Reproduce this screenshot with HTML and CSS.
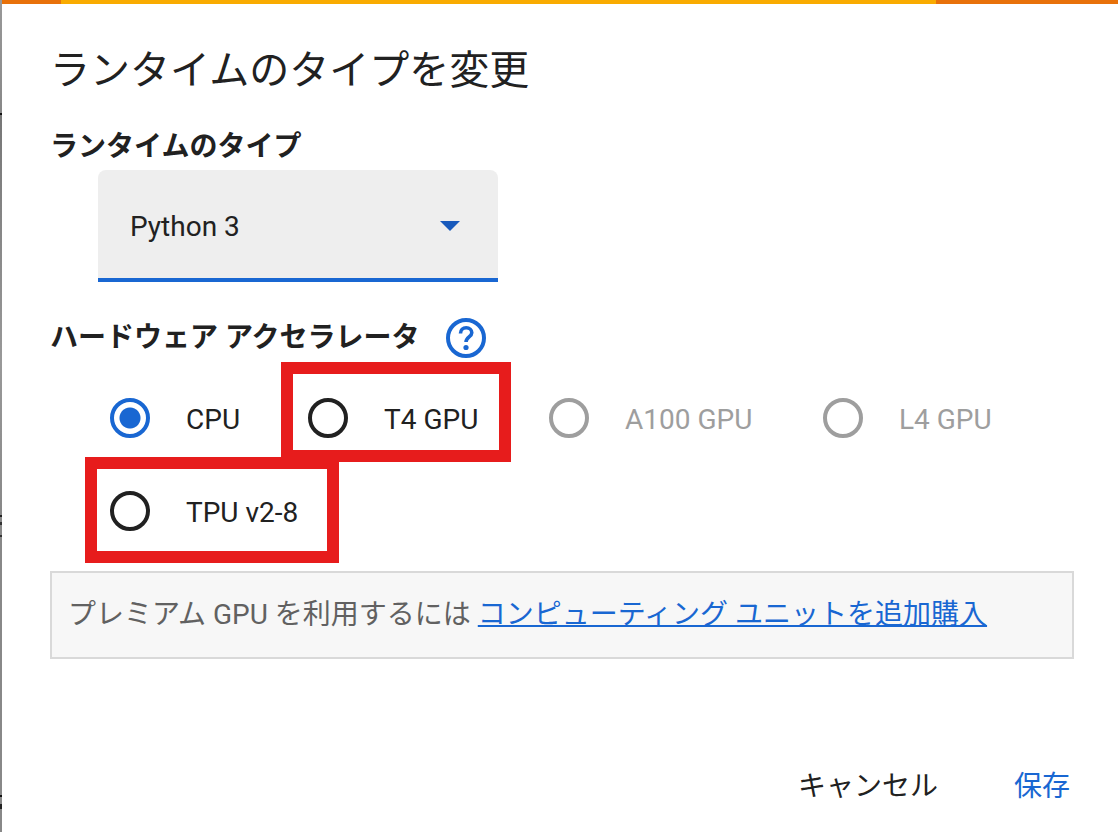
FILE: index.html
```html
<!DOCTYPE html>
<html lang="ja">
<head>
<meta charset="utf-8">
<meta name="viewport" content="width=device-width, initial-scale=1">
<title>ランタイムのタイプを変更</title>
<link rel="stylesheet" href="styles.css">
</head>
<body>
<div class="backdrop">
  <form class="dialog" role="dialog" aria-labelledby="dialog-title">
    <div class="accent"></div>
    <div class="content">
      <h1 class="title" id="dialog-title">ランタイムのタイプを変更</h1>
      <label class="heading" for="runtime">ランタイムのタイプ</label>
      <div class="select-field">
        <select class="select" id="runtime">
          <option>Python 3</option>
        </select>
        <svg class="select-arrow" viewBox="0 0 20 10" aria-hidden="true"><path d="M0 0H20L10 10Z" fill="#185abc"/></svg>
      </div>
      <div class="heading-row">
        <h2 class="heading" id="accelerator">ハードウェア アクセラレータ</h2>
        <button class="help" type="button" aria-label="ヘルプ">
          <svg class="help-icon" viewBox="0 0 40 40" aria-hidden="true">
            <circle cx="20" cy="20" r="18" fill="none" stroke="#1967d2" stroke-width="4"/>
            <path d="M14.500 15.500C14.500 12 17 9.800 20.200 9.800C23.500 9.800 25.800 12 25.800 14.800C25.800 18.800 20 19.200 20 24" fill="none" stroke="#1967d2" stroke-width="3.600"/>
            <circle cx="20" cy="29.500" r="2.600" fill="#1967d2"/>
          </svg>
        </button>
      </div>
      <div class="options" role="radiogroup" aria-labelledby="accelerator">
        <label class="option"><input class="radio" type="radio" name="accelerator" checked><span class="option-text">CPU</span></label>
        <label class="option marked"><input class="radio" type="radio" name="accelerator"><span class="option-text">T4 GPU</span></label>
        <label class="option disabled"><input class="radio" type="radio" name="accelerator" disabled><span class="option-text">A100 GPU</span></label>
        <label class="option disabled"><input class="radio" type="radio" name="accelerator" disabled><span class="option-text">L4 GPU</span></label>
        <label class="option option-wide marked marked-wide"><input class="radio" type="radio" name="accelerator"><span class="option-text">TPU v2-8</span></label>
      </div>
      <p class="notice">プレミアム GPU を利用するには <a class="link" href="#">コンピューティング ユニットを追加購入</a></p>
      <div class="actions">
        <button class="action" type="button">キャンセル</button>
        <button class="action primary" type="submit">保存</button>
      </div>
    </div>
  </form>
</div>
</body>
</html>
```

FILE: styles.css
```css
*,
*::before,
*::after {
  box-sizing: border-box;
}

body {
  margin: 0;
  font-family: Roboto, "Noto Sans CJK JP", sans-serif;
  font-size: 28px;
  line-height: 40px;
  color: #212121;
}

/* Dimmed page, visible as a thin strip beside the dialog */
.backdrop {
  min-height: 100vh;
  padding-left: 2px;
  background: linear-gradient(#999 0, #888 113px, #111 113px, #111 115px, #777 115px, #999 362px, #888 515px, #222 515px, #222 517px, #888 517px, #888 522px, #333 522px, #333 525px, #888 525px, #888 535px, #333 535px, #333 537px, #888 537px, #888 795px, #111 795px, #111 797px, #888 797px, #888 804px, #222 804px, #222 809px, #888 809px);
}

.dialog {
  display: flex;
  flex-direction: column;
  min-height: 100vh;
  background: #fff;
}

.accent {
  height: 4px;
  background: linear-gradient(90deg, #e8710a 59px, #f9ab00 59px calc(100% - 182px), #e8710a calc(100% - 182px));
}

.content {
  display: flex;
  flex: 1;
  flex-direction: column;
  padding: 37px 44px 25px 48px;
}

.title {
  margin: 0;
  font-size: 40px;
  font-weight: 400;
  line-height: 60px;
}

.heading {
  margin: 26px 0 0;
  font-size: 28px;
  font-weight: 700;
  line-height: 40px;
}

.select-field {
  display: grid;
  align-items: center;
  width: 400px;
  max-width: 100%;
  margin: 3px 0 0 48px;
}

.select {
  grid-area: 1 / 1;
  width: 100%;
  height: 112px;
  padding: 6px 64px 0 32px;
  appearance: none;
  border: 0;
  border-bottom: 4px solid #1967d2;
  border-radius: 8px 8px 0 0;
  background: #eee;
  color: inherit;
  font: inherit;
}

.select-arrow {
  grid-area: 1 / 1;
  justify-self: end;
  width: 20px;
  height: 10px;
  margin-right: 38px;
  pointer-events: none;
}

.heading-row {
  display: flex;
  align-items: center;
  gap: 26px;
  margin-top: 36px;
}

.heading-row .heading {
  margin: 0;
}

.help {
  width: 40px;
  height: 40px;
  padding: 0;
  border: 0;
  background: none;
}

.help-icon {
  display: block;
}

.options {
  display: grid;
  grid-template-columns: 130px 173px 206px auto;
  gap: 49px 68px;
  margin: 38px 0 0 60px;
}

.option {
  position: relative;
  display: flex;
  align-items: center;
  gap: 36px;
  white-space: nowrap;
}

.option-wide {
  grid-column: span 2;
}

.option-text {
  padding-top: 4px;
}

.radio {
  flex: none;
  width: 40px;
  height: 40px;
  margin: 0;
  appearance: none;
  border: 4px solid #212121;
  border-radius: 50%;
}

.radio:checked {
  border-color: #1967d2;
  background: radial-gradient(circle, #1967d2 10px, transparent 11px);
}

.disabled {
  color: #9e9e9e;
}

.disabled .radio {
  border-color: #9e9e9e;
}

/* Red callout frames drawn over the highlighted options */
.marked::after {
  content: "";
  position: absolute;
  top: -34px;
  left: -27px;
  width: 230px;
  height: 100px;
  border: 12px solid #e71c1c;
  pointer-events: none;
}

.marked-wide::after {
  top: -32px;
  left: -25px;
  width: 254px;
  height: 106px;
}

.notice {
  margin: 38px 0 0;
  padding: 22px 16px;
  border: 2px solid #d9d9d9;
  background: #f7f7f7;
  color: #616161;
}

.link {
  color: #1967d2;
  text-decoration-thickness: 2px;
}

.actions {
  display: flex;
  justify-content: flex-end;
  gap: 76px;
  margin-top: auto;
  padding-right: 4px;
}

.action {
  padding: 0;
  border: 0;
  background: none;
  color: inherit;
  font: inherit;
}

.primary {
  color: #1967d2;
}
```
